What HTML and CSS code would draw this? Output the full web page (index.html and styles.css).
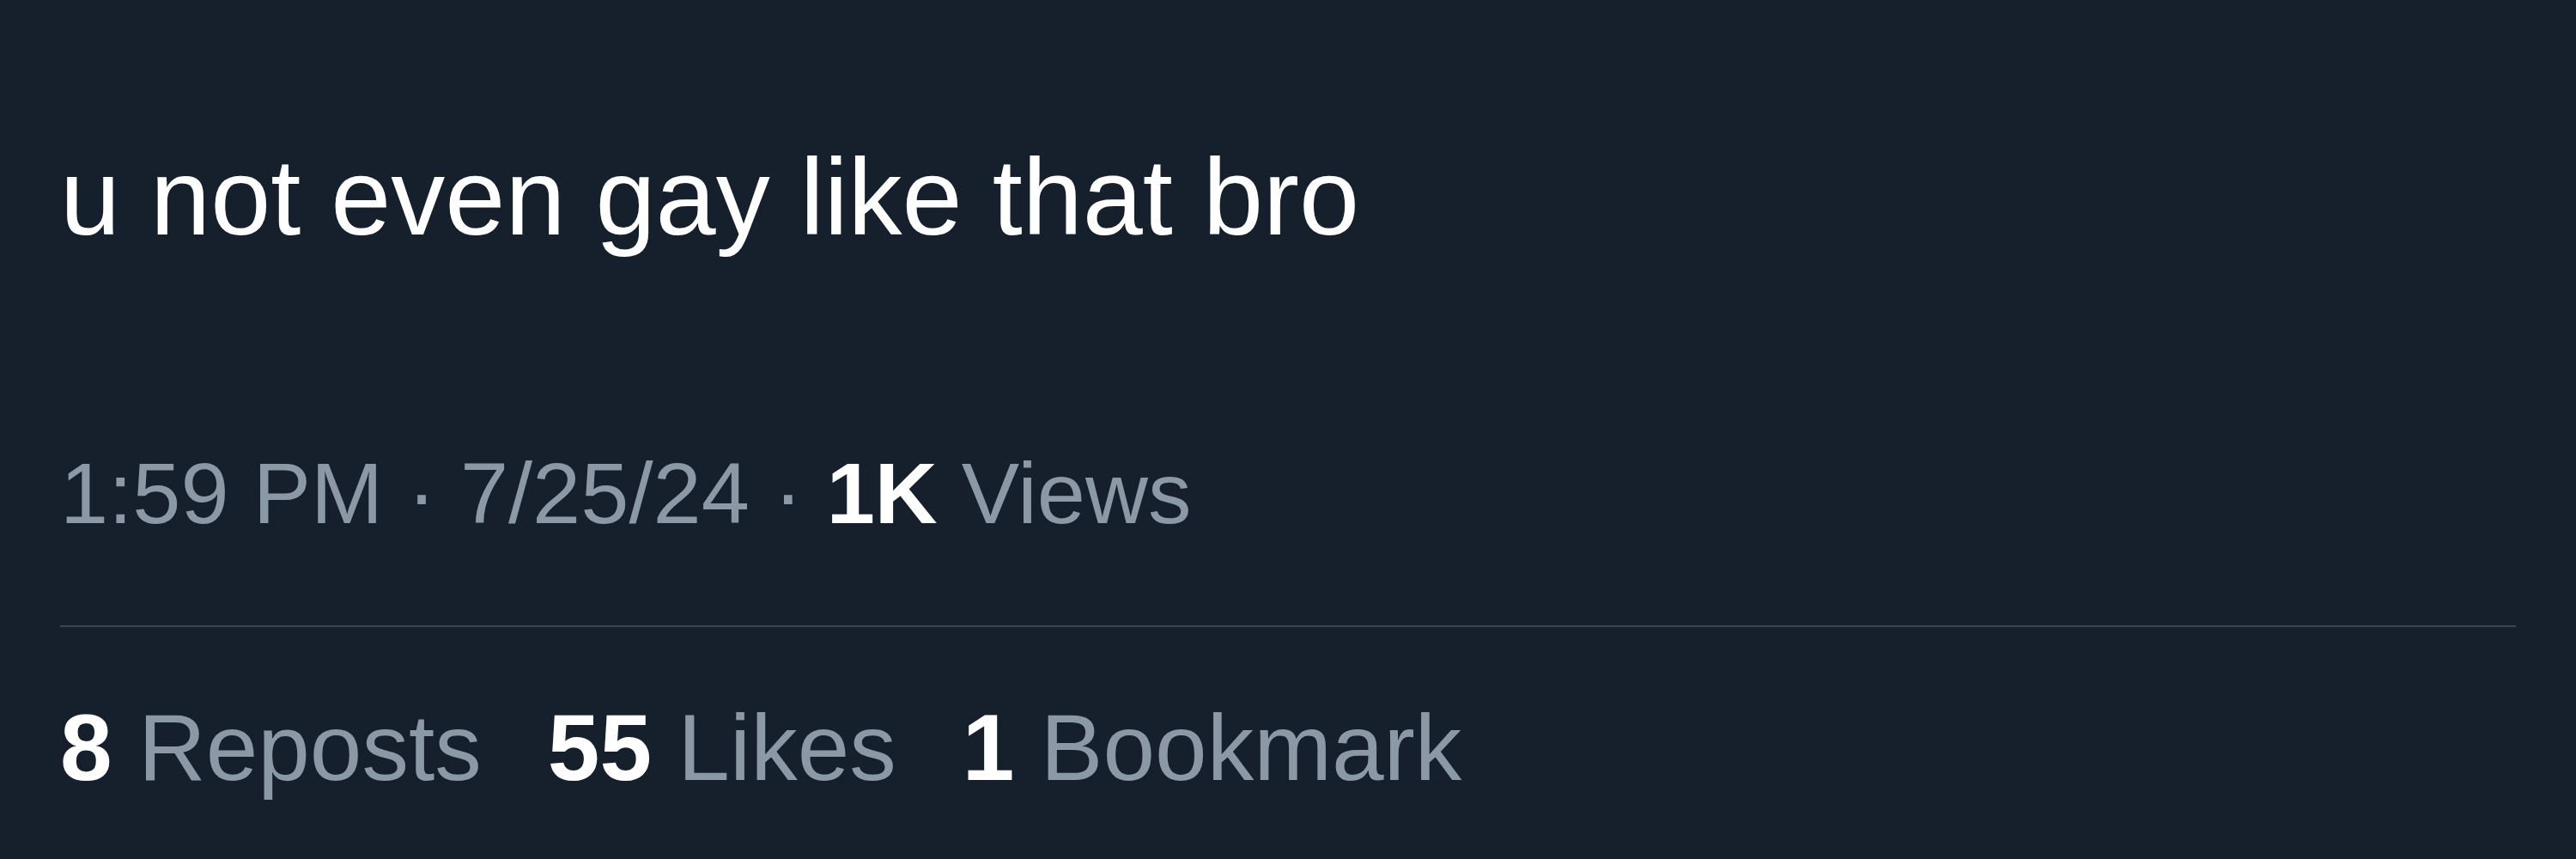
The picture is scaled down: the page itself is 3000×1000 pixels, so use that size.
FILE: index.html
```
<!DOCTYPE html>
<html lang="en">
<head>
<meta charset="utf-8">
<title>Post</title>
<link rel="stylesheet" href="styles.css">
</head>
<body>
<main class="post">
  <p class="post-text">u not even gay like that bro</p>
  <div class="post-meta">1:59 PM · 7/25/24 · <b class="strong">1K</b> Views</div>
  <hr class="divider">
  <div class="stats">
    <span class="stat"><b class="strong">8</b> Reposts</span>
    <span class="stat"><b class="strong">55</b> Likes</span>
    <span class="stat"><b class="strong">1</b> Bookmark</span>
  </div>
</main>
</body>
</html>
```
FILE: styles.css
```
html, body {
  margin: 0;
  padding: 0;
  background: #161f2c;
  height: 100%;
}
body {
  font-family: "Liberation Sans", Arial, sans-serif;
  color: #ffffff;
}
.post {
  display: flex;
  flex-direction: column;
  padding: 157px 70px 0 70px;
}
.post-text {
  margin: 0;
  font-size: 126px;
  line-height: normal;
  color: #ffffff;
}
.post-meta {
  margin-top: 215px;
  font-size: 101px;
  line-height: normal;
  color: #8b98a5;
}
.strong {
  color: #ffffff;
  font-weight: 700;
}
.divider {
  margin: 96px 0 0 0;
  border: 0;
  height: 2px;
  background: #3a4552;
}
.stats {
  margin-top: 77px;
  display: flex;
  gap: 77px;
  font-size: 109px;
  line-height: normal;
  color: #8b98a5;
}
.stat {
  white-space: nowrap;
}
```
